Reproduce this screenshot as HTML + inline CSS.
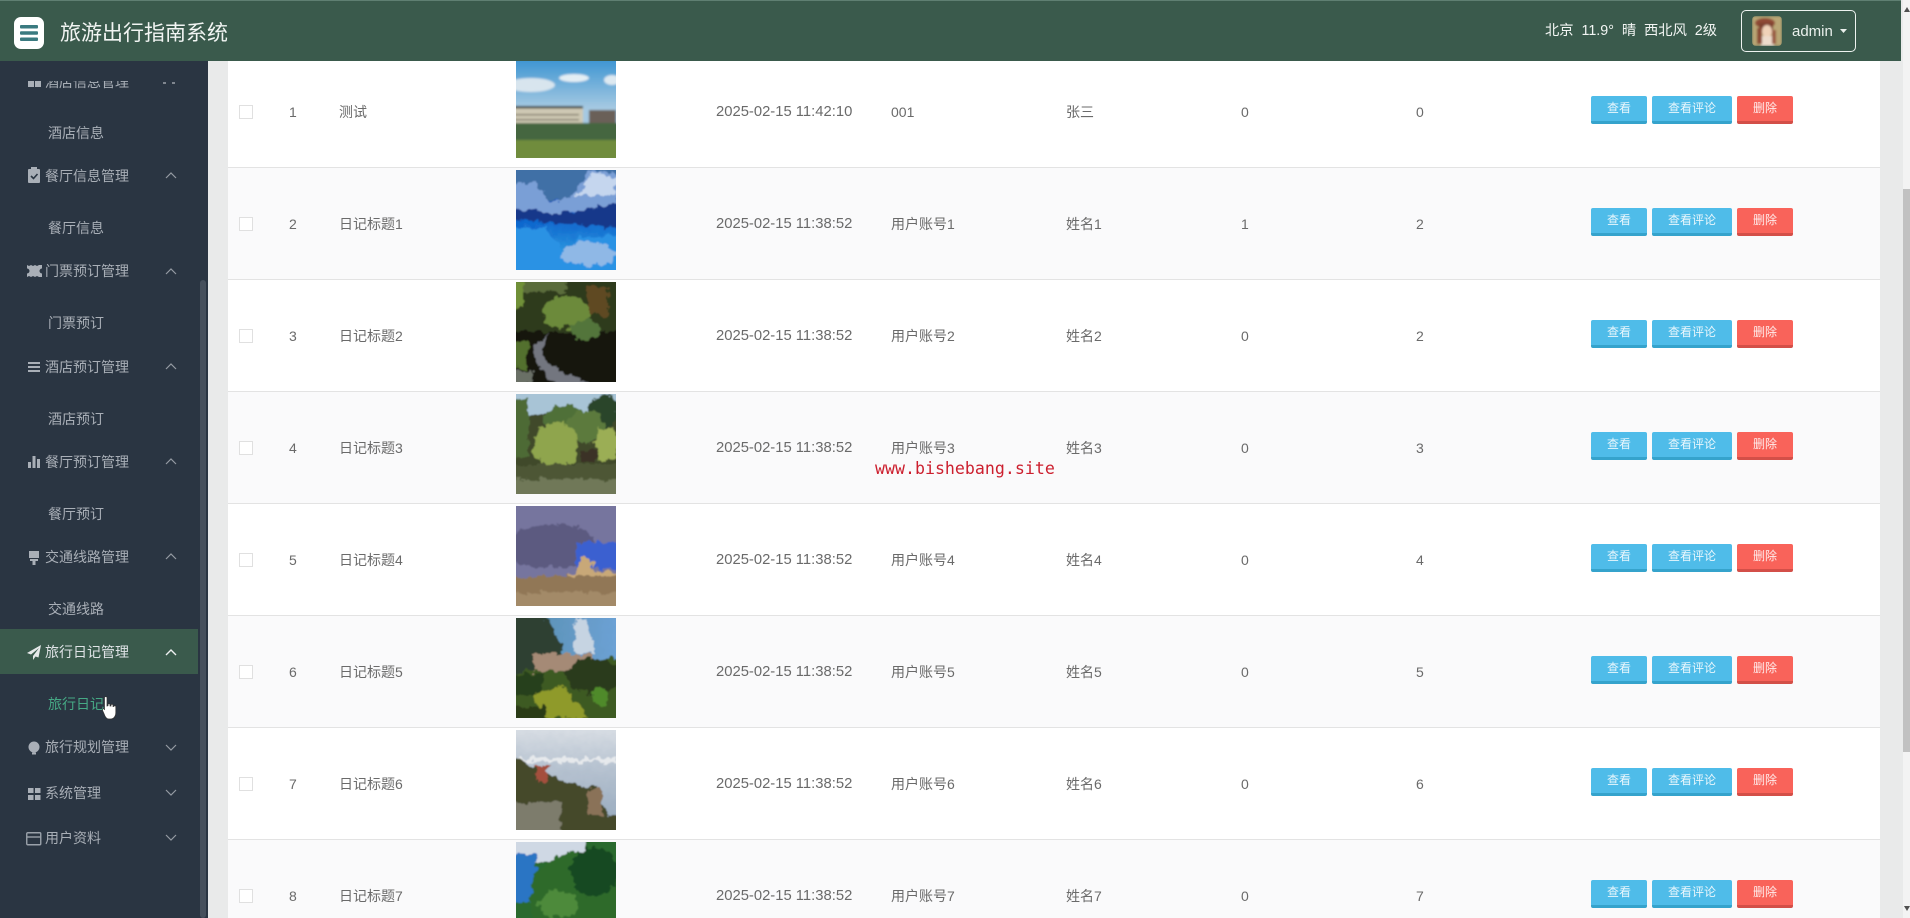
<!DOCTYPE html>
<html lang="zh-CN"><head><meta charset="utf-8"><title>旅游出行指南系统</title>
<style>
*{margin:0;padding:0;box-sizing:border-box}
html,body{width:1910px;height:918px;overflow:hidden;background:#e9eaea;font-family:"Liberation Sans","Noto Sans CJK SC",sans-serif;font-size:14px;color:#6a6a6a}
.abs{position:absolute}
#hd{position:absolute;left:0;top:0;width:1901px;height:61px;background:#3a5a4c;border-top:1px solid #5f7f72;color:#fff}
#side{position:absolute;left:0;top:61px;width:208px;height:857px;background:#2a3542;color:#a9afb7;overflow:hidden}
#side .t{position:absolute;white-space:nowrap;line-height:20px;height:20px;letter-spacing:0}
#side .m{left:45px}
#side .s{left:48px}
#side svg{position:absolute}
#tbl{position:absolute;left:228px;top:61px;width:1652px;height:857px;background:#fff;overflow:hidden}
.r{position:absolute;left:0;width:1652px;height:112px;border-bottom:1px solid #e3e3e3}
.r.e{background:#fafafb}
.c{position:absolute;top:45px;line-height:22px;white-space:nowrap}
.n{left:61px}
.tm{left:488px;font-size:14.800px}
.cb{position:absolute;left:11px;top:49px;width:14px;height:14px;border:1px solid #e0e0e0;background:#fff}
.r svg.p{position:absolute;left:288px;top:2px;width:100px;height:100px}
.b{position:absolute;top:40px;height:28px;line-height:25px;border-radius:2px;color:rgba(255,255,255,.88);text-align:center;font-size:12px}
.b1{left:1363px;width:56px;background:#4fbce9;border-bottom:3px solid #35a3cc}
.b2{left:1424px;width:80px;background:#4fbce9;border-bottom:3px solid #35a3cc}
.b3{left:1509px;width:56px;background:#f9635a;border-bottom:3px solid #d34f48}
</style></head><body>
<svg width="0" height="0" style="position:absolute"><defs>
<filter id="bl" x="0" y="0" width="100%" height="100%"><feGaussianBlur stdDeviation="1"/></filter>
<filter id="ph" x="-10%" y="-10%" width="120%" height="120%"><feTurbulence type="fractalNoise" baseFrequency=".13" numOctaves="3" seed="4" result="n"/><feDisplacementMap in="SourceGraphic" in2="n" scale="11" xChannelSelector="R" yChannelSelector="G"/><feGaussianBlur stdDeviation=".7"/></filter>
<linearGradient id="g1" x1="0" y1="0" x2="0" y2="1"><stop offset="0" stop-color="#2f8ed0"/><stop offset=".5" stop-color="#a5c9e2"/></linearGradient>
<linearGradient id="g2" x1="0" y1="0" x2="0" y2="1"><stop offset="0" stop-color="#0a3a90"/><stop offset=".5" stop-color="#0d63cc"/><stop offset="1" stop-color="#45c2ef"/></linearGradient>
<linearGradient id="g7" x1="0" y1="0" x2="0" y2="1"><stop offset="0" stop-color="#dfe3e8"/><stop offset=".4" stop-color="#b6c2d0"/><stop offset="1" stop-color="#8fa3b8"/></linearGradient>
<linearGradient id="g6" x1="0" y1="0" x2="1" y2="0"><stop offset="0" stop-color="#5d93b8"/><stop offset="1" stop-color="#6ea3d8"/></linearGradient>
</defs></svg>

<div id="tbl">
<div class="r" style="top:-6px;height:113px"><span class="cb" style="top:50px"></span><span class="c n" style="top:46px">1</span><span class="c" style="left:111px;top:46px">测试</span>
<svg class="p" style="top:3px;height:100px" viewBox="0 0 100 100"><g filter="url(#bl)"><rect x="-5" y="-5" width="110" height="110" fill="url(#g1)"/><ellipse cx="15" cy="27" rx="24" ry="7" fill="#d8e5ee"/><ellipse cx="58" cy="20" rx="15" ry="4" fill="#e4eef4"/><ellipse cx="96" cy="22" rx="8" ry="5" fill="#dde9f1"/><rect x="73" y="52" width="27" height="14" fill="#6a6058"/><rect x="-2" y="48" width="69" height="20" fill="#cfc9b4"/><rect x="-2" y="48" width="69" height="2.500" fill="#3f4440"/><rect x="-2" y="56" width="65" height="1.500" fill="#7e7a68"/><rect x="-2" y="61" width="65" height="1.500" fill="#7e7a68"/><rect x="-5" y="65" width="110" height="17" fill="#45663f"/><rect x="-5" y="82" width="110" height="20" fill="#6f8c3c"/></g></svg>
<span class="c tm" style="top:46px">2025-02-15 11:42:10</span><span class="c" style="left:663px;top:46px">001</span><span class="c" style="left:838px;top:46px">张三</span><span class="c" style="left:1013px;top:46px">0</span><span class="c" style="left:1188px;top:46px">0</span>
<span class="b b1" style="top:41px">查看</span><span class="b b2" style="top:41px">查看评论</span><span class="b b3" style="top:41px">删除</span></div>

<div class="r e" style="top:107px"><span class="cb"></span><span class="c n">2</span><span class="c" style="left:111px">日记标题1</span>
<svg class="p" viewBox="0 0 100 100"><g filter="url(#ph)"><rect x="-10" y="-10" width="120" height="120" fill="url(#g2)"/><rect x="-10" y="-10" width="120" height="40" fill="#3f6fa6"/><polygon points="-5,15 18,12 35,32 55,28 75,0 105,5 105,42 -5,44" fill="#7a9fd6"/><polygon points="60,25 78,2 100,8 100,25" fill="#c5d6ee"/><polygon points="-5,38 30,42 55,44 105,30 105,58 -5,50" fill="#17398a"/><polygon points="-5,55 30,58 40,74 50,88 62,68 105,65 105,105 -5,105" fill="#2a92e4"/><ellipse cx="73" cy="84" rx="27" ry="12" fill="#8fb8e6"/></g></svg>
<span class="c tm">2025-02-15 11:38:52</span><span class="c" style="left:663px">用户账号1</span><span class="c" style="left:838px">姓名1</span><span class="c" style="left:1013px">1</span><span class="c" style="left:1188px">2</span>
<span class="b b1">查看</span><span class="b b2">查看评论</span><span class="b b3">删除</span></div>

<div class="r" style="top:219px"><span class="cb"></span><span class="c n">3</span><span class="c" style="left:111px">日记标题2</span>
<svg class="p" viewBox="0 0 100 100"><g filter="url(#ph)"><rect x="-10" y="-10" width="120" height="120" fill="#14180c"/><rect x="-10" y="-10" width="120" height="60" fill="#2f3a1c"/><rect x="-10" y="-5" width="60" height="15" fill="#5a6c3a"/><ellipse cx="50" cy="30" rx="24" ry="16" fill="#6c8a3a"/><ellipse cx="70" cy="48" rx="15" ry="10" fill="#52743a"/><rect x="72" y="5" width="20" height="28" fill="#5e4822"/><rect x="-5" y="0" width="12" height="26" fill="#6f9038"/><rect x="-5" y="58" width="17" height="28" fill="#53702f"/><path d="M35 50 Q18 68 32 80 Q48 92 75 102 L42 102 Q14 85 20 62 Z" fill="#73767f"/><rect x="-5" y="88" width="22" height="14" fill="#6a6f66"/></g></svg>
<span class="c tm">2025-02-15 11:38:52</span><span class="c" style="left:663px">用户账号2</span><span class="c" style="left:838px">姓名2</span><span class="c" style="left:1013px">0</span><span class="c" style="left:1188px">2</span>
<span class="b b1">查看</span><span class="b b2">查看评论</span><span class="b b3">删除</span></div>

<div class="r e" style="top:331px"><span class="cb"></span><span class="c n">4</span><span class="c" style="left:111px">日记标题3</span>
<svg class="p" viewBox="0 0 100 100"><g filter="url(#ph)"><rect x="-10" y="-10" width="120" height="120" fill="#3f4a2c"/><rect x="-10" y="-10" width="120" height="30" fill="#a8c4d6"/><rect x="-5" y="5" width="17" height="60" fill="#4e6a34"/><ellipse cx="48" cy="25" rx="22" ry="14" fill="#4f6f38"/><ellipse cx="88" cy="17" rx="15" ry="16" fill="#2a452a"/><ellipse cx="70" cy="32" rx="18" ry="16" fill="#5c7a3c"/><ellipse cx="40" cy="52" rx="22" ry="24" fill="#8fa54e"/><ellipse cx="90" cy="50" rx="12" ry="18" fill="#9bae55"/><rect x="66" y="56" width="14" height="12" fill="#3a3028"/><rect x="-5" y="70" width="110" height="35" fill="#4d5634"/><rect x="-5" y="85" width="110" height="20" fill="#6f7858"/></g></svg>
<span class="c tm">2025-02-15 11:38:52</span><span class="c" style="left:663px">用户账号3</span><span class="c" style="left:838px">姓名3</span><span class="c" style="left:1013px">0</span><span class="c" style="left:1188px">3</span>
<span class="b b1">查看</span><span class="b b2">查看评论</span><span class="b b3">删除</span></div>

<div class="r" style="top:443px"><span class="cb"></span><span class="c n">5</span><span class="c" style="left:111px">日记标题4</span>
<svg class="p" viewBox="0 0 100 100"><g filter="url(#ph)"><rect x="-10" y="-10" width="120" height="120" fill="#76749e"/><ellipse cx="35" cy="40" rx="45" ry="22" fill="#5c5a80"/><rect x="60" y="36" width="45" height="26" fill="#3a60d0"/><polygon points="62,64 66,50 73,50 77,64 105,68 105,78 35,78" fill="#c8a878"/><rect x="-5" y="70" width="110" height="35" fill="#917757"/><rect x="-5" y="86" width="110" height="19" fill="#a38a68"/></g></svg>
<span class="c tm">2025-02-15 11:38:52</span><span class="c" style="left:663px">用户账号4</span><span class="c" style="left:838px">姓名4</span><span class="c" style="left:1013px">0</span><span class="c" style="left:1188px">4</span>
<span class="b b1">查看</span><span class="b b2">查看评论</span><span class="b b3">删除</span></div>

<div class="r e" style="top:555px"><span class="cb"></span><span class="c n">6</span><span class="c" style="left:111px">日记标题5</span>
<svg class="p" viewBox="0 0 100 100"><g filter="url(#ph)"><rect x="-10" y="-10" width="120" height="120" fill="#3c5a24"/><rect x="25" y="-10" width="85" height="50" fill="url(#g6)"/><polygon points="60,0 72,0 80,35 58,35" fill="#c6d4e2"/><polygon points="-5,-5 28,-5 50,38 30,50 -5,55" fill="#2f4030"/><rect x="18" y="36" width="58" height="17" fill="#a58a76"/><rect x="-5" y="55" width="30" height="22" fill="#27401f"/><ellipse cx="78" cy="58" rx="28" ry="18" fill="#2c3a1c"/><polygon points="15,78 48,68 72,100 30,100" fill="#8f9a2a"/><ellipse cx="84" cy="78" rx="8" ry="9" fill="#4f8a2c"/><rect x="-5" y="88" width="35" height="15" fill="#2a3a16"/></g></svg>
<span class="c tm">2025-02-15 11:38:52</span><span class="c" style="left:663px">用户账号5</span><span class="c" style="left:838px">姓名5</span><span class="c" style="left:1013px">0</span><span class="c" style="left:1188px">5</span>
<span class="b b1">查看</span><span class="b b2">查看评论</span><span class="b b3">删除</span></div>

<div class="r" style="top:667px"><span class="cb"></span><span class="c n">7</span><span class="c" style="left:111px">日记标题6</span>
<svg class="p" viewBox="0 0 100 100"><g filter="url(#ph)"><rect x="-10" y="-10" width="120" height="120" fill="url(#g7)"/><rect x="0" y="28" width="100" height="4" fill="#e6e9ec"/><polygon points="-5,25 18,38 60,55 78,58 92,85 105,85 105,105 -5,105" fill="#444a2c"/><rect x="20" y="36" width="12" height="16" fill="#a4503c"/><rect x="72" y="60" width="14" height="25" fill="#8a7258"/><rect x="-5" y="72" width="50" height="33" fill="#7d7c6c"/></g></svg>
<span class="c tm">2025-02-15 11:38:52</span><span class="c" style="left:663px">用户账号6</span><span class="c" style="left:838px">姓名6</span><span class="c" style="left:1013px">0</span><span class="c" style="left:1188px">6</span>
<span class="b b1">查看</span><span class="b b2">查看评论</span><span class="b b3">删除</span></div>

<div class="r e" style="top:779px"><span class="cb"></span><span class="c n">8</span><span class="c" style="left:111px">日记标题7</span>
<svg class="p" viewBox="0 0 100 100"><g filter="url(#ph)"><rect x="-10" y="-10" width="120" height="120" fill="#2c6a2e"/><rect x="-10" y="-10" width="80" height="30" fill="#cfd8e4"/><rect x="-10" y="12" width="30" height="48" fill="#2a74c4"/><ellipse cx="62" cy="58" rx="48" ry="48" fill="#2e6a2c"/><ellipse cx="78" cy="30" rx="24" ry="24" fill="#184a22"/><ellipse cx="42" cy="62" rx="20" ry="14" fill="#4d8a3a"/></g></svg>
<span class="c tm">2025-02-15 11:38:52</span><span class="c" style="left:663px">用户账号7</span><span class="c" style="left:838px">姓名7</span><span class="c" style="left:1013px">0</span><span class="c" style="left:1188px">7</span>
<span class="b b1">查看</span><span class="b b2">查看评论</span><span class="b b3">删除</span></div>
</div>

<div class="abs" style="left:875px;top:459px;font:16.6px/20px 'DejaVu Sans Mono',monospace;color:#cc1f2e;white-space:nowrap">www.bishebang.site</div>

<div id="side">
<span class="t m" style="top:11px;left:45px">酒店信息管理</span>
<svg style="left:28px;top:20px" width="14" height="6"><rect width="6" height="6" fill="#a9afb7"/><rect x="7" width="6" height="6" fill="#a9afb7"/></svg>
<svg style="left:163px;top:21px" width="14" height="3"><rect width="3" height="2" fill="#7f868f"/><rect x="9" width="3" height="2" fill="#7f868f"/></svg>
<div class="abs" style="left:0;top:0;width:208px;height:20px;background:#2a3542"></div>
<span class="t s" style="top:62px">酒店信息</span>
<span class="t m" style="top:105px">餐厅信息管理</span>
<svg style="left:28px;top:106px" width="14" height="17" viewBox="0 0 14 17"><rect y="2" width="12" height="14" rx="1" fill="#a9afb7"/><rect x="3" y="0" width="6" height="4" fill="#a9afb7"/><path d="M3 9l2.500 2.500L9.500 7" stroke="#2a3542" stroke-width="1.600" fill="none"/></svg>
<span class="t s" style="top:157px">餐厅信息</span>
<span class="t m" style="top:200px">门票预订管理</span>
<svg style="left:27px;top:204px" width="15" height="12" viewBox="0 0 15 12"><path d="M0 0l2 1 2-1 2 1 2-1 2 1 2-1 3 0v3.500a2.500 2.500 0 0 0 0 5V12l-3 0-2-1-2 1-2-1-2 1-2-1-2 1V8.500a2.500 2.500 0 0 0 0-5z" fill="#a9afb7"/></svg>
<span class="t s" style="top:252px">门票预订</span>
<span class="t m" style="top:296px">酒店预订管理</span>
<svg style="left:28px;top:301px" width="12" height="10"><rect width="12" height="2" fill="#a9afb7"/><rect y="4" width="12" height="2" fill="#a9afb7"/><rect y="8" width="12" height="2" fill="#a9afb7"/></svg>
<span class="t s" style="top:348px">酒店预订</span>
<span class="t m" style="top:391px">餐厅预订管理</span>
<svg style="left:28px;top:395px" width="12" height="12"><rect y="6" width="3" height="6" fill="#a9afb7"/><rect x="4.500" y="0" width="3" height="12" fill="#a9afb7"/><rect x="9" y="3" width="3" height="9" fill="#a9afb7"/></svg>
<span class="t s" style="top:443px">餐厅预订</span>
<span class="t m" style="top:486px">交通线路管理</span>
<svg style="left:29px;top:490px" width="11" height="14"><rect width="10" height="7" fill="#a9afb7"/><rect x="1" y="8" width="8" height="2" fill="#a9afb7"/><rect x="3.500" y="10" width="3" height="4" fill="#a9afb7"/></svg>
<span class="t s" style="top:538px">交通线路</span>

<div class="abs" style="left:0;top:568px;width:198px;height:45px;background:#3a5a4c"></div>
<span class="t m" style="top:581px;color:#dfe3e6">旅行日记管理</span>
<svg style="left:27px;top:584px" width="14" height="15" viewBox="0 0 14 15"><path d="M14 0L0 8l4 1.500L12 3 6 11v4l2.500-3.500 3 1z" fill="#e6e9ea"/></svg>
<span class="t s" style="top:633px;color:#46a985">旅行日记</span>
<span class="t m" style="top:676px">旅行规划管理</span>
<svg style="left:28px;top:680px" width="12" height="14"><circle cx="6" cy="6" r="5.500" fill="#a9afb7"/><rect x="4" y="11.500" width="4" height="2" fill="#a9afb7"/></svg>
<span class="t m" style="top:722px">系统管理</span>
<svg style="left:28px;top:727px" width="13" height="12"><rect width="5.500" height="5" fill="#a9afb7"/><rect x="7" width="5.500" height="5" fill="#a9afb7"/><rect y="7" width="5.500" height="5" fill="#a9afb7"/><rect x="7" y="7" width="5.500" height="5" fill="#a9afb7"/></svg>
<span class="t m" style="top:767px">用户资料</span>
<svg style="left:26px;top:771px" width="16" height="14"><rect x=".75" y=".75" width="14" height="12" rx="1" fill="none" stroke="#9aa1aa" stroke-width="1.400"/><path d="M1 5h14" stroke="#9aa1aa" stroke-width="1.400"/></svg>

<svg style="left:165px;top:111px" width="12" height="7" fill="none" stroke="#959ba3" stroke-width="1.200"><path d="M1 6l5-5 5 5"/></svg>
<svg style="left:165px;top:207px" width="12" height="7" fill="none" stroke="#959ba3" stroke-width="1.200"><path d="M1 6l5-5 5 5"/></svg>
<svg style="left:165px;top:302px" width="12" height="7" fill="none" stroke="#959ba3" stroke-width="1.200"><path d="M1 6l5-5 5 5"/></svg>
<svg style="left:165px;top:397px" width="12" height="7" fill="none" stroke="#959ba3" stroke-width="1.200"><path d="M1 6l5-5 5 5"/></svg>
<svg style="left:165px;top:492px" width="12" height="7" fill="none" stroke="#959ba3" stroke-width="1.200"><path d="M1 6l5-5 5 5"/></svg>
<svg style="left:165px;top:588px" width="12" height="7" fill="none" stroke="#eef0f1" stroke-width="1.400"><path d="M1 6l5-5 5 5"/></svg>
<svg style="left:165px;top:683px" width="12" height="7" fill="none" stroke="#959ba3" stroke-width="1.200"><path d="M1 1l5 5 5-5"/></svg>
<svg style="left:165px;top:728px" width="12" height="7" fill="none" stroke="#959ba3" stroke-width="1.200"><path d="M1 1l5 5 5-5"/></svg>
<svg style="left:165px;top:773px" width="12" height="7" fill="none" stroke="#959ba3" stroke-width="1.200"><path d="M1 1l5 5 5-5"/></svg>

<div class="abs" style="left:200px;top:219px;width:6px;height:638px;background:#46505c;border-radius:3px"></div>
<svg style="left:102px;top:635px" width="15" height="24" viewBox="0 0 15 24"><path d="M2.500 1.500C2.500.3 5 .3 5 1.500V10l1-.3V8.500c0-1 2-1 2 0V10l1 0V9c0-1 2-1 2 0v1.500l.8 0c0-1 2-1 2 0V17c0 3-2 6-5 6H7c-2 0-3-1-4-3L.6 14.500c-.6-1.500 1-2.500 2-1l-.1.500z" fill="#fff" stroke="#333" stroke-width=".7"/></svg>
</div>

<div id="hd">
<div class="abs" style="left:14px;top:16px;width:30px;height:32px;background:#fff;border-radius:7px"></div>
<svg class="abs" style="left:20px;top:24px" width="18" height="16"><rect width="18" height="3.500" rx="1" fill="#3a7a80"/><rect y="6.300" width="18" height="3.500" rx="1" fill="#3a7a80"/><rect y="12.500" width="18" height="3.500" rx="1" fill="#3a7a80"/></svg>
<div class="abs" style="left:60px;top:18px;font-size:21px;line-height:30px;white-space:nowrap;color:#f2f5f3">旅游出行指南系统</div>
<div class="abs" style="left:1545px;top:20px;font-size:14.300px;line-height:20px;white-space:nowrap;color:#f2f5f3;word-spacing:3.900px">北京 11.9° 晴 西北风 2级</div>
<div class="abs" style="left:1741px;top:9px;width:115px;height:42px;border:1px solid #eef3f0;border-radius:5px"></div>
<svg class="abs" style="left:1752px;top:15px" width="30" height="30" viewBox="0 0 30 30"><defs><clipPath id="av"><rect width="30" height="30" rx="4"/></clipPath></defs><g clip-path="url(#av)" filter="url(#bl)"><rect width="30" height="30" fill="#b9a675"/><ellipse cx="13" cy="7" rx="10" ry="5" fill="#8f4a34"/><rect x="7" y="7" width="14" height="9" fill="#7d3f2e"/><ellipse cx="15" cy="15" rx="5" ry="6" fill="#f0d2b8"/><rect x="9" y="20" width="13" height="10" fill="#eddccc"/><rect x="5" y="12" width="5" height="16" fill="#8a4c36"/><rect x="20" y="14" width="4" height="14" fill="#9a5a42"/></g></svg>
<div class="abs" style="left:1792px;top:21px;font-size:15px;line-height:20px;color:#eaf0ec">admin</div>
<svg class="abs" style="left:1840px;top:28px" width="7" height="4"><path d="M0 0h7L3.500 4z" fill="#eaf0ec"/></svg>
</div>

<div class="abs" style="left:1903px;top:0;width:7px;height:918px;background:#f3f3f3"></div>
<div class="abs" style="left:1903px;top:189px;width:7px;height:563px;background:#c1c1c1"></div>
<svg class="abs" style="left:1904px;top:7px" width="6" height="5"><path d="M3 0l3 5H0z" fill="#505050"/></svg>
<svg class="abs" style="left:1904px;top:906px" width="6" height="5"><path d="M0 0h6L3 5z" fill="#505050"/></svg>
</body></html>
